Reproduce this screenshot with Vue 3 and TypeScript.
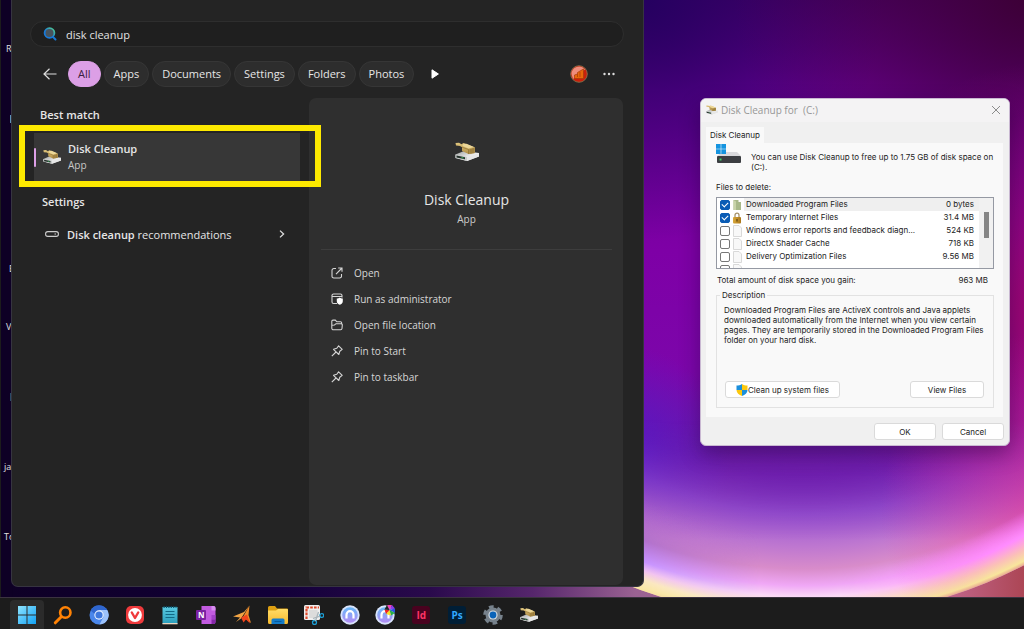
<script setup lang="ts">
import { ref } from 'vue'

interface CleanupItem {
  id: string
  name: string
  size: string
  icon: 'folder' | 'lock' | 'page'
  checked: boolean
}

interface Pinned {
  id: string
  label: string
  mark?: string
}

const query = ref('disk cleanup')
const filters = ['All', 'Apps', 'Documents', 'Settings', 'Folders', 'Photos']
const activeFilter = ref('All')

const actions = [
  { icon: 'i-open', label: 'Open' },
  { icon: 'i-admin', label: 'Run as administrator' },
  { icon: 'i-folder', label: 'Open file location' },
  { icon: 'i-pin', label: 'Pin to Start' },
  { icon: 'i-pin', label: 'Pin to taskbar' },
]

const items = ref<CleanupItem[]>([
  { id: 'f1', name: 'Downloaded Program Files', size: '0 bytes', icon: 'folder', checked: true },
  { id: 'f2', name: 'Temporary Internet Files', size: '31.4 MB', icon: 'lock', checked: true },
  { id: 'f3', name: 'Windows error reports and feedback diagn...', size: '524 KB', icon: 'page', checked: false },
  { id: 'f4', name: 'DirectX Shader Cache', size: '718 KB', icon: 'page', checked: false },
  { id: 'f5', name: 'Delivery Optimization Files', size: '9.56 MB', icon: 'page', checked: false },
  { id: 'f6', name: '', size: '', icon: 'page', checked: false },
])

const pinned: Pinned[] = [
  { id: 't-start', label: 'Start' },
  { id: 't-find', label: 'Everything' },
  { id: 't-chromium', label: 'Chromium' },
  { id: 't-vivaldi', label: 'Vivaldi' },
  { id: 't-notepad', label: 'Notepad' },
  { id: 't-onenote', label: 'OneNote', mark: 'N' },
  { id: 't-star', label: 'Launcher' },
  { id: 't-explorer', label: 'File Explorer' },
  { id: 't-snip', label: 'Snipping Tool' },
  { id: 't-arch', label: 'Browser' },
  { id: 't-arch-color', label: 'Browser colors' },
  { id: 't-id', label: 'InDesign', mark: 'Id' },
  { id: 't-ps', label: 'Photoshop', mark: 'Ps' },
  { id: 't-settings', label: 'Settings' },
  { id: 'i-disk', label: 'Disk Cleanup' },
]
</script>

<template>
  <div class="desktop">
    <svg class="defs" aria-hidden="true">
      <defs>
        <linearGradient id="gBrush" x1="0" y1="0" x2="0" y2="1">
          <stop offset="0" stop-color="#e0c67e" /><stop offset="1" stop-color="#b08d44" />
        </linearGradient>
        <linearGradient id="gDrive" x1="0" y1="0" x2="1" y2="1">
          <stop offset="0" stop-color="#9a9d9c" /><stop offset=".6" stop-color="#f2f2f2" /><stop offset="1" stop-color="#c4c4c4" />
        </linearGradient>
        <linearGradient id="gWin" x1="0" y1="0" x2="1" y2="1">
          <stop offset="0" stop-color="#8fe4ff" /><stop offset="1" stop-color="#12a2f5" />
        </linearGradient>
        <linearGradient id="gNote" x1="0" y1="0" x2="0" y2="1">
          <stop offset="0" stop-color="#59c9e0" /><stop offset="1" stop-color="#2a9dbb" />
        </linearGradient>
        <linearGradient id="gFolder" x1="0" y1="0" x2="0" y2="1">
          <stop offset="0" stop-color="#ffdc67" /><stop offset="1" stop-color="#f7b92c" />
        </linearGradient>
        <linearGradient id="gArch" x1="0" y1="0" x2="0" y2="1">
          <stop offset="0" stop-color="#66b8f8" /><stop offset="1" stop-color="#b58cf5" />
        </linearGradient>
        <linearGradient id="gLens" x1="0" y1="1" x2="1" y2="0">
          <stop offset=".4" stop-color="#1879d8" /><stop offset="1" stop-color="#55d58c" />
        </linearGradient>
        <linearGradient id="gLock" x1="0" y1="0" x2="1" y2="0">
          <stop offset="0" stop-color="#d9a83a" /><stop offset="1" stop-color="#a9761a" />
        </linearGradient>
      </defs>

      <symbol id="i-disk" viewBox="0 0 24 20">
        <path d="M.5 12.500 9 9l15 2v3.500l-12 4.500L.5 16Z" fill="url(#gDrive)" />
        <path d="M.5 12.500 12 15v4L.5 16Z" fill="#c9cccb" />
        <path d="M1.500 13.500l8.500 1.800v2L1.500 15.500Z" fill="#24302a" />
        <path d="M6.500 15l2 .4v1l-2-.4Z" fill="#3cae5c" />
        <path d="M24 11v3.500L12 19v-4Z" fill="#e6e6e6" />
        <path d="M.5 1 4 .8l2.500 1.400L8.500 1l11.500 4.500V11l-6.500 1L7 9V5.200L5 4 1 3.500Z" fill="url(#gBrush)" />
        <path d="M13.500 7.500 20 5.500V11l-6.500 1Z" fill="#a98a48" />
        <path d="M7 5.200l6.500 2.300V12M16 7v4.500M18 6.300V11" fill="none" stroke="#86692c" stroke-width=".6" />
        <path d="M8.500 2l3-.3 7.500 3.300-5.500 1.500L7.500 4Z" fill="#ecd798" />
      </symbol>
      <symbol id="i-open" viewBox="0 0 12 12">
        <path d="M5 1.500H2.800A1.800 1.800 0 0 0 1 3.300v5.900A1.800 1.800 0 0 0 2.800 11h5.900a1.800 1.800 0 0 0 1.800-1.800V7M7.200 1H11v3.800M11 1 5 7.200" fill="none" stroke="currentColor" stroke-width="1.100" />
      </symbol>
      <symbol id="i-admin" viewBox="0 0 12 12">
        <path d="M6 10.500H2.600A1.600 1.600 0 0 1 1 8.900V2.600A1.600 1.600 0 0 1 2.600 1h6.800A1.600 1.600 0 0 1 11 2.600V4.500M1 3.500h10" fill="none" stroke="currentColor" stroke-width="1.100" />
        <path d="M8.800 4.500c1 .8 1.800 1 3 1v2.700c0 1.800-1.300 2.800-3 3.500-1.700-.7-3-1.700-3-3.500V5.500c1.200 0 2-.2 3-1Z" fill="#fff" />
      </symbol>
      <symbol id="i-folder" viewBox="0 0 12 12">
        <path d="M.8 9.500V2.300a1.200 1.200 0 0 1 1.200-1.200h2.300L5.800 2.800h3.700A1.200 1.200 0 0 1 10.700 4v.6M2.400 10.700h7.200A1.400 1.400 0 0 0 11 9.500l.3-3.500a1.200 1.200 0 0 0-1.200-1.300H5L3.500 6 .8 6.200v3a1.500 1.500 0 0 0 1.600 1.500Z" fill="none" stroke="currentColor" stroke-width="1.100" />
      </symbol>
      <symbol id="i-pin" viewBox="0 0 12 12">
        <path d="M7.600 .8 11.200 4.400 8.800 6.200 7.800 9.500 2.500 4.300 5.800 3.300ZM5 7 .8 11.200" fill="none" stroke="currentColor" stroke-width="1.100" stroke-linejoin="round" />
      </symbol>

      <symbol id="t-start" viewBox="0 0 20 20">
        <path d="M1 1h8.500v8.500H1ZM10.500 1H19v8.500h-8.500ZM1 10.500h8.500V19H1ZM10.500 10.500H19V19h-8.500Z" fill="url(#gWin)" />
      </symbol>
      <symbol id="t-find" viewBox="0 0 20 20">
        <circle cx="12.300" cy="7.500" r="5.200" fill="none" stroke="#ff8205" stroke-width="2.600" />
        <path d="M8.300 11.700 2.300 17.800" stroke="#ff8205" stroke-width="3" stroke-linecap="round" />
      </symbol>
      <symbol id="t-chromium" viewBox="0 0 20 20">
        <circle cx="10" cy="10" r="9.500" fill="#4a86ea" />
        <path d="M10 5h8.300A9.500 9.500 0 0 1 10.500 19.500L14.500 12Z" fill="#9cc2fb" />
        <path d="M1.700 5.400A9.500 9.500 0 0 1 18.300 5H10L5.500 9Z" fill="#2f66cf" />
        <circle cx="10" cy="10" r="4.700" fill="#e8f0ff" /><circle cx="10" cy="10" r="3.600" fill="#3f78dd" />
      </symbol>
      <symbol id="t-vivaldi" viewBox="0 0 20 20">
        <rect x="1" y="1" width="18" height="18" rx="5" fill="#ef3a3c" />
        <circle cx="10" cy="10" r="6.900" fill="#fff" />
        <path d="M6.800 7.500 10 13l3.200-5.500" fill="none" stroke="#ef3a3c" stroke-width="2.400" stroke-linecap="round" stroke-linejoin="round" />
      </symbol>
      <symbol id="t-notepad" viewBox="0 0 20 20">
        <path d="M2.500 2h15v17h-15Z" fill="url(#gNote)" /><path d="M2.500 18h15v1.300h-15Z" fill="#e8d5c0" />
        <path d="M5.500 6.500h9M5.500 9.500h9M5.500 12.500h9" stroke="#136a86" stroke-width="1" />
        <path d="M3.500 2h13" stroke="#0d5068" stroke-width="2" stroke-dasharray="1.200 1.200" />
      </symbol>
      <symbol id="t-onenote" viewBox="0 0 20 20">
        <path d="M5.500 1h12a2 2 0 0 1 2 2v14a2 2 0 0 1-2 2h-12Z" fill="#c25be0" />
        <path d="M15.500 1h2a2 2 0 0 1 2 2v2.500h-4Z" fill="#d88df0" /><path d="M15.500 10h4v4.500h-4Z" fill="#a33fc9" /><path d="M15.500 14.500h4V17a2 2 0 0 1-2 2h-2Z" fill="#8527a8" />
        <rect x="0" y="5" width="10" height="10" rx="1" fill="#7a1fa2" />
      </symbol>
      <symbol id="t-star" viewBox="0 0 20 20">
        <path d="M17.500 .5 12 7 1 11.500 8 12.500 4 17l5-3.500Z" fill="#f2a444" />
        <path d="M17.500 .5 16.500 10 19 18l-8-6Z" fill="#ec8a2a" />
        <path d="M9 12.500l6-3 3 9-4-4-2.500 3Z" fill="#f0441d" />
      </symbol>
      <symbol id="t-explorer" viewBox="0 0 20 20">
        <path d="M0 2.500A1.500 1.500 0 0 1 1.500 1H7l2 2.500h10a1 1 0 0 1 1 1V8H0Z" fill="#dd9f12" />
        <path d="M0 5.500h8L10 4h9a1 1 0 0 1 1 1v12.500a1.500 1.500 0 0 1-1.500 1.500h-17A1.500 1.500 0 0 1 0 17.500Z" fill="url(#gFolder)" />
        <path d="M3.500 19v-4A1.500 1.500 0 0 1 5 13.500h10a1.500 1.500 0 0 1 1.500 1.500v4Z" fill="#147cc8" /><path d="M6.500 16h7v1h-7Z" fill="#085b9c" />
      </symbol>
      <symbol id="t-snip" viewBox="0 0 20 20">
        <rect x="0" y="0" width="16" height="15" rx="1.500" fill="#efefef" />
        <path d="M2.500 14V2.500H15" fill="none" stroke="#e0492a" stroke-width="2.200" stroke-dasharray="2.600 1.200" />
        <rect x="5" y="5" width="8.500" height="8" fill="#dcdcdc" />
        <circle cx="10.500" cy="17.500" r="2" fill="none" stroke="#1c9ed4" stroke-width="1.300" /><circle cx="17.800" cy="10.500" r="1.900" fill="none" stroke="#1c9ed4" stroke-width="1.300" />
        <path d="M11.500 16 14.500 7M16 11.200 9 13.500" stroke="#a9b4ba" stroke-width="1.300" />
      </symbol>
      <symbol id="t-arch" viewBox="0 0 20 20">
        <circle cx="10" cy="10" r="9.700" fill="#d9e4fb" /><circle cx="10" cy="10" r="7.800" fill="url(#gArch)" />
        <path d="M6.500 13.500V9.700a3.500 3.500 0 0 1 7 0v3.800" fill="none" stroke="#fff" stroke-width="2.200" />
      </symbol>
      <symbol id="t-arch-color" viewBox="0 0 20 20">
        <circle cx="10" cy="10" r="9.700" fill="#d9e4fb" /><circle cx="10" cy="10" r="7.800" fill="url(#gArch)" />
        <path d="M6.500 13.500V9.700a3.500 3.500 0 0 1 7 0v3.800" fill="none" stroke="#fff" stroke-width="2.200" />
        <path d="M14.500 5 12 0h5Z" fill="#f541bb" /><path d="M14.500 5 17 0l3 3.500Z" fill="#8b3df0" /><path d="M14.500 5l5.500-1.500V8Z" fill="#2d55e0" />
        <path d="M14.500 5 20 8l-4 2.500Z" fill="#24b04a" /><path d="M14.500 5 16 10.500 11 9Z" fill="#f5e024" /><path d="M14.500 5 11 9 9.500 4.500Z" fill="#e22" /><path d="M14.500 5l-5-.5L12 0Z" fill="#222" />
      </symbol>
      <symbol id="t-id" viewBox="0 0 20 20"><rect x="1" y="1" width="18" height="18" rx="3" fill="#49021f" /></symbol>
      <symbol id="t-ps" viewBox="0 0 20 20"><rect x="1" y="1" width="18" height="18" rx="3" fill="#001e36" /></symbol>
      <symbol id="t-settings" viewBox="0 0 20 20">
        <circle cx="10" cy="10" r="7.500" fill="#77828c" />
        <circle cx="10" cy="10" r="8.300" fill="none" stroke="#77828c" stroke-width="3" stroke-dasharray="4.700 4" />
        <circle cx="10" cy="10" r="4.600" fill="#d7dde2" /><circle cx="10" cy="10" r="3.400" fill="#0a63b8" />
      </symbol>

      <symbol id="f-folder" viewBox="0 0 10 12"><path d="M1.500 1h5v2H9v8H1.500Z" fill="#a8b98a" /><path d="M1.500 1 4 2.500V11H1.500Z" fill="#c8d3a9" /></symbol>
      <symbol id="f-lock" viewBox="0 0 10 12">
        <path d="M3 6V3.200a2 2 0 0 1 4 0V6" fill="none" stroke="#a7936a" stroke-width="1.300" /><rect x="1" y="5" width="8" height="6.500" rx="1" fill="url(#gLock)" /><path d="M5 7v2.500" stroke="#5b430f" stroke-width="1.200" />
      </symbol>
      <symbol id="f-page" viewBox="0 0 10 12"><path d="M1.500.5H7L9.500 3v8.500h-8Z" fill="#f8f8f8" stroke="#d0d0d0" stroke-width=".8" /></symbol>
    </svg>

    <div class="workspace">
      <svg class="wallpaper" viewBox="0 0 1024 597" preserveAspectRatio="none" aria-hidden="true">
        <defs>
          <linearGradient id="wOuter"><stop offset="0" stop-color="#0e0025" /><stop offset=".27" stop-color="#120038" /><stop offset=".42" stop-color="#2a0a4c" /><stop offset=".52" stop-color="#56266c" /><stop offset=".62" stop-color="#9a6292" /><stop offset=".93" stop-color="#c06488" /><stop offset="1" stop-color="#ac4655" /></linearGradient>
          <linearGradient id="wInner" gradientUnits="userSpaceOnUse" x1="0" y1="0" x2="0" y2="597"><stop offset="0" stop-color="#460060" /><stop offset=".15" stop-color="#680090" /><stop offset=".42" stop-color="#7e00a6" /><stop offset=".62" stop-color="#7c06aa" /><stop offset=".75" stop-color="#6a18a4" /><stop offset="1" stop-color="#7020b4" /></linearGradient>
          <radialGradient id="wGlow" gradientUnits="userSpaceOnUse" cx="804" cy="142" r="477">
            <stop offset=".6" stop-color="#6b18a6" stop-opacity="0" /><stop offset=".7" stop-color="#7428b8" stop-opacity=".9" /><stop offset=".78" stop-color="#9a56d2" /><stop offset=".85" stop-color="#bf78d0" /><stop offset=".895" stop-color="#d88cca" /><stop offset=".93" stop-color="#f0a8f6" /><stop offset=".953" stop-color="#fad8f6" /><stop offset=".975" stop-color="#fbeccb" /><stop offset=".992" stop-color="#faf0a2" /><stop offset="1" stop-color="#e8b8a0" />
          </radialGradient>
          <radialGradient id="wBlue" gradientUnits="userSpaceOnUse" cx="644" cy="0" r="240"><stop offset="0" stop-color="#250060" /><stop offset="1" stop-color="#2c0070" stop-opacity="0" /></radialGradient>
          <radialGradient id="wDark" gradientUnits="userSpaceOnUse" cx="1034" cy="-10" r="300"><stop offset="0" stop-color="#3c0034" /><stop offset="1" stop-color="#4a0050" stop-opacity="0" /></radialGradient>
          <radialGradient id="wRight" gradientUnits="userSpaceOnUse" cx="1060" cy="310" r="250"><stop offset="0" stop-color="#9c0664" /><stop offset="1" stop-color="#9c0890" stop-opacity="0" /></radialGradient>
          <radialGradient id="wLeft" gradientUnits="userSpaceOnUse" cx="620" cy="455" r="110"><stop offset="0" stop-color="#5016cc" stop-opacity=".9" /><stop offset="1" stop-color="#5a1acc" stop-opacity="0" /></radialGradient>
          <radialGradient id="wPink" gradientUnits="userSpaceOnUse" cx="1060" cy="510" r="180"><stop offset="0" stop-color="#e0309c" stop-opacity=".7" /><stop offset="1" stop-color="#e030a0" stop-opacity="0" /></radialGradient>
          <radialGradient id="wRim" gradientUnits="userSpaceOnUse" cx="804" cy="142" r="477"><stop offset=".9" stop-color="#ff80ff" stop-opacity="0" /><stop offset=".945" stop-color="#ff8cff" /><stop offset=".972" stop-color="#fbc0b8" /><stop offset=".992" stop-color="#f8e69c" /><stop offset="1" stop-color="#e8a890" /></radialGradient>
          <radialGradient id="wRimLeft" gradientUnits="userSpaceOnUse" cx="804" cy="142" r="477"><stop offset=".82" stop-color="#a25cd0" stop-opacity="0" /><stop offset=".9" stop-color="#b070cc" /><stop offset=".942" stop-color="#c490ff" /><stop offset=".96" stop-color="#f0c0f0" /><stop offset=".978" stop-color="#fae6c0" /><stop offset="1" stop-color="#f8e6a0" /></radialGradient>
          <linearGradient id="wFade" gradientUnits="userSpaceOnUse" x1="840" y1="0" x2="990" y2="0"><stop offset="0" stop-color="#000" /><stop offset="1" stop-color="#fff" /></linearGradient>
          <linearGradient id="wFadeLeft" gradientUnits="userSpaceOnUse" x1="640" y1="0" x2="760" y2="0"><stop offset="0" stop-color="#fff" /><stop offset="1" stop-color="#000" /></linearGradient>
          <linearGradient id="wDown" gradientUnits="userSpaceOnUse" x1="0" y1="420" x2="0" y2="540"><stop offset="0" stop-color="#000" /><stop offset="1" stop-color="#fff" /></linearGradient>
          <mask id="wMask" maskUnits="userSpaceOnUse" x="0" y="0" width="1024" height="597"><rect y="480" width="1024" height="117" fill="url(#wFade)" /></mask>
          <mask id="wMaskLeft" maskUnits="userSpaceOnUse" x="0" y="0" width="1024" height="597"><rect y="480" width="1024" height="117" fill="url(#wFadeLeft)" /></mask>
          <mask id="wMaskDown" maskUnits="userSpaceOnUse" x="0" y="0" width="1024" height="597"><rect width="1024" height="597" fill="url(#wDown)" /></mask>
        </defs>
        <rect width="1024" height="597" fill="url(#wOuter)" />
        <circle cx="804" cy="142" r="477" fill="url(#wInner)" />
        <circle cx="804" cy="142" r="477" fill="url(#wBlue)" />
        <circle cx="804" cy="142" r="477" fill="url(#wDark)" />
        <circle cx="804" cy="142" r="477" fill="url(#wRight)" />
        <circle cx="804" cy="142" r="477" fill="url(#wLeft)" />
        <circle cx="804" cy="142" r="477" fill="url(#wGlow)" mask="url(#wMaskDown)" />
        <circle cx="804" cy="142" r="477" fill="url(#wPink)" />
        <circle cx="804" cy="142" r="477" fill="url(#wRim)" mask="url(#wMask)" />
        <circle cx="804" cy="142" r="477" fill="url(#wRimLeft)" mask="url(#wMaskLeft)" />
        <rect width="12" height="597" fill="#0e0025" />
      </svg>

      <span class="shortcut s1">R</span>
      <span class="shortcut s2"></span>
      <span class="shortcut s3">E</span>
      <span class="shortcut s4">V</span>
      <span class="shortcut s5"></span>
      <span class="shortcut s6">ja</span>
      <span class="shortcut s7">To</span>

      <section class="search-panel" aria-label="Search">
        <label class="search-box">
          <svg viewBox="0 0 14 14" width="14" height="14" aria-hidden="true">
            <circle cx="6.500" cy="6" r="4.900" fill="#48545e" stroke="url(#gLens)" stroke-width="1.800" />
            <path d="M10 10l2.500 2.500" stroke="#1879d8" stroke-width="2" stroke-linecap="round" />
          </svg>
          <input v-model="query" type="text" aria-label="Search query" />
        </label>

        <nav class="filters">
          <button class="plain back" aria-label="Back">
            <svg viewBox="0 0 14 12" width="14" height="12"><path d="M6.500 .8 1 6l5.500 5.200M1 6h12.500" fill="none" stroke="#ddd" stroke-width="1.200" /></svg>
          </button>
          <button v-for="f in filters" :key="f" class="chip" :class="{ active: f === activeFilter }" @click="activeFilter = f">{{ f }}</button>
          <button class="plain more" aria-label="More filters">
            <svg viewBox="0 0 8 10" width="8" height="10"><path d="M1 .8 7.400 5 1 9.200Z" fill="#fff" stroke="#fff" stroke-linejoin="round" /></svg>
          </button>
          <span class="spacer"></span>
          <button class="plain" aria-label="Account">
            <svg viewBox="0 0 18 18" width="18" height="18">
              <circle cx="9" cy="9" r="8.300" fill="#c9200c" stroke="#8e7a50" stroke-width=".8" />
              <path d="M1.500 9A7.500 7.500 0 0 1 15 4.500L3 14Z" fill="#ee8d7c" />
              <path d="M4.500 13.500V10l3-1V7.500L13.500 4v9.500Z" fill="#e8680c" /><path d="M4.500 13.500V10l3-1V7.500L13.500 4v9.500ZM7.500 9v3M10 7v5" fill="none" stroke="#a83a08" stroke-width=".7" />
            </svg>
          </button>
          <button class="plain dots" aria-label="Options">
            <svg viewBox="0 0 12 4" width="12" height="4"><g fill="#ddd"><circle cx="1.500" cy="2" r="1.200" /><circle cx="6" cy="2" r="1.200" /><circle cx="10.500" cy="2" r="1.200" /></g></svg>
          </button>
        </nav>

        <div class="columns">
          <div class="results">
            <h2>Best match</h2>
            <button class="result">
              <span class="accent"></span>
              <svg width="18" height="16" aria-hidden="true"><use href="#i-disk" /></svg>
              <span class="result-text"><strong>Disk Cleanup</strong><small>App</small></span>
            </button>
            <h2 class="second">Settings</h2>
            <button class="setting">
              <svg viewBox="0 0 14 6" width="14" height="6" aria-hidden="true"><rect x=".6" y=".6" width="12.800" height="4.800" rx="2.200" fill="none" stroke="#ccc" stroke-width="1.100" /><path d="M9.500 3h1.500" stroke="#ccc" /></svg>
              <span><strong>Disk cleanup</strong> recommendations</span>
              <svg class="chev" viewBox="0 0 6 8" width="6" height="8" aria-hidden="true"><path d="M1 .6 4.600 4 1 7.400" fill="none" stroke="#ddd" stroke-width="1.300" /></svg>
            </button>
            <div class="highlight"></div>
          </div>

          <article class="detail">
            <svg width="24" height="20" aria-hidden="true"><use href="#i-disk" /></svg>
            <h1>Disk Cleanup</h1>
            <p>App</p>
            <ul>
              <li v-for="a in actions" :key="a.label">
                <button class="action">
                  <svg width="12" height="12" aria-hidden="true"><use :href="'#' + a.icon" /></svg>
                  {{ a.label }}
                </button>
              </li>
            </ul>
          </article>
        </div>
      </section>

      <section class="dialog" role="dialog" aria-label="Disk Cleanup">
        <header>
          <svg width="12" height="10" aria-hidden="true"><use href="#i-disk" /></svg>
          <span>Disk Cleanup for&nbsp; (C:)</span>
          <button class="close" aria-label="Close">
            <svg viewBox="0 0 10 10" width="10" height="10"><path d="M1 1l8 8M9 1 1 9" stroke="#8c8c8c" stroke-width="1" /></svg>
          </button>
        </header>
        <div class="tabs"><button class="tab">Disk Cleanup</button></div>
        <div class="page">
          <div class="intro">
            <svg viewBox="0 0 26 20" width="26" height="20" aria-hidden="true">
              <path d="M6 8h15l4 4H1Z" fill="#d9d9dc" /><rect x="1" y="12" width="24" height="7" rx="1" fill="#3c3e42" />
              <rect x="3.500" y="14.500" width="2" height="2" fill="#41d26c" />
              <path d="M0 0h4.700v4.700H0ZM5.300 0H10v4.700H5.300ZM0 5.300h4.700V10H0ZM5.300 5.300H10V10H5.300Z" fill="#1594e0" />
            </svg>
            <p>You can use Disk Cleanup to free up to 1.75 GB of disk space on (C:).</p>
          </div>
          <div class="body">
            <p class="list-title">Files to delete:</p>
            <div class="list">
              <ul>
                <li v-for="(it, i) in items" :key="it.id" :class="{ current: i === 0 }">
                  <input :id="it.id" v-model="it.checked" type="checkbox" :aria-label="it.name || 'More files'" />
                  <svg width="10" height="12" aria-hidden="true"><use :href="'#f-' + it.icon" /></svg>
                  <label :for="it.id"><span>{{ it.name }}</span><span>{{ it.size }}</span></label>
                </li>
              </ul>
              <div class="track"><div class="thumb"></div></div>
            </div>
            <p class="total"><span>Total amount of disk space you gain:</span><span>963 MB</span></p>
            <fieldset>
              <legend>Description</legend>
              <p>Downloaded Program Files are ActiveX controls and Java applets downloaded automatically from the Internet when you view certain pages. They are temporarily stored in the Downloaded Program Files folder on your hard disk.</p>
              <div class="row">
                <button class="btn wide">
                  <svg viewBox="0 0 12 12" width="12" height="12" aria-hidden="true">
                    <path d="M6 0C4.500 1 2.500 1.500.5 1.500V6H6Z" fill="#1b8fdc" /><path d="M6 0c1.500 1 3.500 1.500 5.500 1.500V6H6Z" fill="#fcc80d" />
                    <path d="M.5 6c0 3 2.500 5 5.500 6V6Z" fill="#fcc80d" /><path d="M11.500 6c0 3-2.500 5-5.500 6V6Z" fill="#1b8fdc" />
                  </svg>Clean up system files
                </button>
                <button class="btn view">View Files</button>
              </div>
            </fieldset>
          </div>
        </div>
        <footer><button class="btn">OK</button><button class="btn">Cancel</button></footer>
      </section>
    </div>

    <footer class="taskbar">
      <div class="pins">
        <button v-for="(p, i) in pinned" :key="p.id" class="pin" :class="[p.id, { on: i === 0 }]" :aria-label="p.label">
          <svg :width="i === 14 ? 18 : 20" :height="i === 14 ? 16 : 20"><use :href="'#' + p.id" /></svg>
          <span v-if="p.mark" class="mark">{{ p.mark }}</span>
        </button>
      </div>
    </footer>
  </div>
</template>

<style>
html, body { margin: 0; height: 100%; }
#app { height: 100%; }
</style>

<style scoped>
* { box-sizing: border-box; }
button { font: inherit; color: inherit; border: 0; background: none; padding: 0; margin: 0; }
ul { list-style: none; margin: 0; padding: 0; }
p, h1, h2 { margin: 0; }
svg { display: block; flex: none; }
.defs { position: absolute; width: 0; height: 0; }

.desktop { height: 100vh; display: flex; flex-direction: column; overflow: hidden; font-family: "Open Sans", "Noto Sans", sans-serif; font-size: 11px; background: #1c1c1c; }
.workspace { position: relative; flex: 1; min-height: 0; overflow: hidden; border-left: 1px solid #1c1c1c; }
.wallpaper { position: absolute; inset: 0; width: 100%; height: 100%; }
.shortcut { position: absolute; color: #e0e0e0; font-size: 9px; line-height: 12px; }
.s1 { left: 5px; top: 43px; }
.s2 { left: 9px; top: 115px; width: 2px; height: 8px; background: #5c93b5; }
.s3 { left: 8px; top: 263px; }
.s4 { left: 5px; top: 321px; }
.s5 { left: 9px; top: 393px; width: 2px; height: 8px; background: #2a4a66; }
.s6 { left: 3px; top: 461px; }
.s7 { left: 3px; top: 531px; }

.search-panel { position: absolute; left: 10px; right: 380px; top: 0; bottom: 10px; display: flex; flex-direction: column; background: #242424; border: 1px solid #363440; border-top: 0; border-radius: 0 0 7px 7px; color: #e6e6e6; padding: 21px 19px 1px 18px; }
.search-box { display: flex; align-items: center; gap: 9px; height: 26px; padding: 0 12px; border: 1px solid #2e2e2e; border-radius: 13px; background: #1f1f1f; flex: none; }
.search-box input { flex: 1; border: 0; outline: 0; padding: 0; background: none; color: #e2e2e2; font: inherit; }
.filters { display: flex; align-items: center; gap: 3px; margin-top: 14px; height: 26px; flex: none; padding: 0 9px 0 13px; }
.plain { display: grid; place-items: center; }
.back { margin-right: 8px; }
.chip { height: 26px; padding: 0 9px 2px; border-radius: 13px; background: #2d2d2d; border: 1px solid #363636; font-weight: 500; }
.chip.active { background: #dc9fe6; border-color: #dc9fe6; color: #3a2040; }
.more { margin-left: 14px; }
.spacer { flex: 1; }
.dots { margin-left: 12px; }

.columns { flex: 1; display: flex; min-height: 0; margin-top: 11px; }
.results { position: relative; flex: 1; min-width: 0; }
.results h2 { font-size: 11px; font-weight: 600; line-height: 16px; margin: 9px 0 0 10px; }
.result { display: flex; align-items: center; gap: 7px; width: calc(100% - 13px); height: 48px; margin: 10px 0 0 4px; background: #373737; text-align: left; }
.accent { width: 2px; height: 19px; border-radius: 1px; background: #dc9fe6; }
.result-text { display: flex; flex-direction: column; }
.result-text strong { line-height: 16px; }
.result-text small { font-size: 10px; line-height: 16px; color: #c8c8c8; }
strong { font-weight: 600; }
.results h2.second { margin: 13px 0 0 12px; }
.setting { display: flex; align-items: center; gap: 8px; height: 24px; width: calc(100% - 15px); margin: 12px 0 0 15px; text-align: left; }
.chev { margin-left: auto; margin-right: 24px; }
.highlight { position: absolute; left: -11px; right: -12px; top: 27px; height: 62px; border: 6px solid #fde900; z-index: 1; pointer-events: none; }

.detail { width: 314px; background: #2f2f2f; border-radius: 7px; display: flex; flex-direction: column; align-items: center; padding: 44px 11px 0 12px; margin-right: 1px; }
.detail h1 { font-size: 14px; font-weight: 400; line-height: 20px; margin-top: 28px; }
.detail p { font-size: 10px; line-height: 14px; margin-top: 2px; color: #ccc; }
.detail ul { align-self: stretch; margin-top: 23px; padding-top: 10px; border-top: 1px solid #3d3d3d; }
.action { display: flex; align-items: center; gap: 11px; height: 26px; width: 100%; padding-left: 10px; font-size: 10px; color: #d6d6d6; text-align: left; }

.dialog { position: absolute; right: 14px; top: 98px; width: 310px; background: #f0f0f0; border-radius: 6px; border: 1px solid #c9b8d2; color: #1c1c1c; font-family: Inter, "Liberation Sans", sans-serif; font-size: 8px; line-height: 10px; box-shadow: 0 8px 20px rgba(20, 0, 40, .35); overflow: hidden; }
.dialog header { display: flex; align-items: center; gap: 3px; height: 23px; padding: 0 8px 1px 5px; background: #f4f3f4; color: #979797; font-family: "Open Sans", sans-serif; font-size: 10px; }
.close { margin-left: auto; }
.tabs { display: flex; margin: 5px 0 0 5px; }
.tab { height: 16px; padding: 0 4px; background: #f9f9f9; }
.page { margin: 0 6px 0 5px; padding: 1px 0 9px; background: #f9f9f9; }
.intro { display: flex; gap: 9px; padding-left: 10px; }
.intro p { padding-top: 8px; }
.body { padding: 0 9px 0 10px; }
.list-title { margin: 10px 0 5px; }
.list { display: flex; height: 72px; border: 1px solid #9599a3; background: #fff; overflow: hidden; }
.list ul { flex: 1; overflow: hidden; }
.list li { display: flex; align-items: center; height: 13px; padding-left: 3px; gap: 2px; }
.list input { appearance: none; width: 10px; height: 10px; margin: 0; border: 1px solid #777; border-radius: 2px; background: #fff; flex: none; }
.list input:checked { border-color: #0a5cb5; background: #0a5cb5; display: grid; place-items: center; }
.list input:checked::after { content: ""; width: 5px; height: 3px; border: solid #fff; border-width: 0 0 1px 1px; transform: translateY(-1px) rotate(-45deg); }
.list label { flex: 1; display: flex; justify-content: space-between; padding: 1px 5px 1px 2px; line-height: 11px; }
.list .current label { background: #efefef; }
.track { width: 14px; background: #f1f1f1; padding: 14px 4px 0 5px; }
.thumb { width: 5px; height: 26px; background: #868686; }
.total { display: flex; justify-content: space-between; margin: 6px 6px 5px 1px; }
fieldset { margin: 0; padding: 5px 5px 9px 7px; border: 1px solid #e2e2e2; min-width: 0; }
legend { padding: 0 2px; margin-left: -4px; }
.row { display: flex; justify-content: space-between; margin: 36px 4px 0 1px; }
.btn { display: flex; align-items: center; justify-content: center; height: 17px; width: 62px; background: #fff; border: 1px solid #dadada; border-radius: 3px; }
.btn.wide { width: 115px; }
.btn.view { width: 74px; }
.dialog > footer { display: flex; justify-content: flex-end; gap: 6px; padding: 6px 5px 5px; }

.taskbar { height: 32px; flex: none; background: #1c1c1c; border-top: 1px solid #3b3340; padding-left: 10px; }
.pins { width: 536px; height: 100%; display: flex; justify-content: space-between; padding-top: 2px; }
.pin { width: 34px; display: grid; place-items: center; }
.pin > * { grid-area: 1 / 1; }
.pin.on { background: #2b2b2b; border-radius: 4px 4px 0 0; }
.mark { font-size: 10px; line-height: 12px; font-weight: 700; }
.t-id .mark { color: #ff3366; }
.t-ps .mark { color: #31a8ff; }
.t-onenote .mark { color: #fff; font-size: 8px; padding-right: 10px; }
</style>
